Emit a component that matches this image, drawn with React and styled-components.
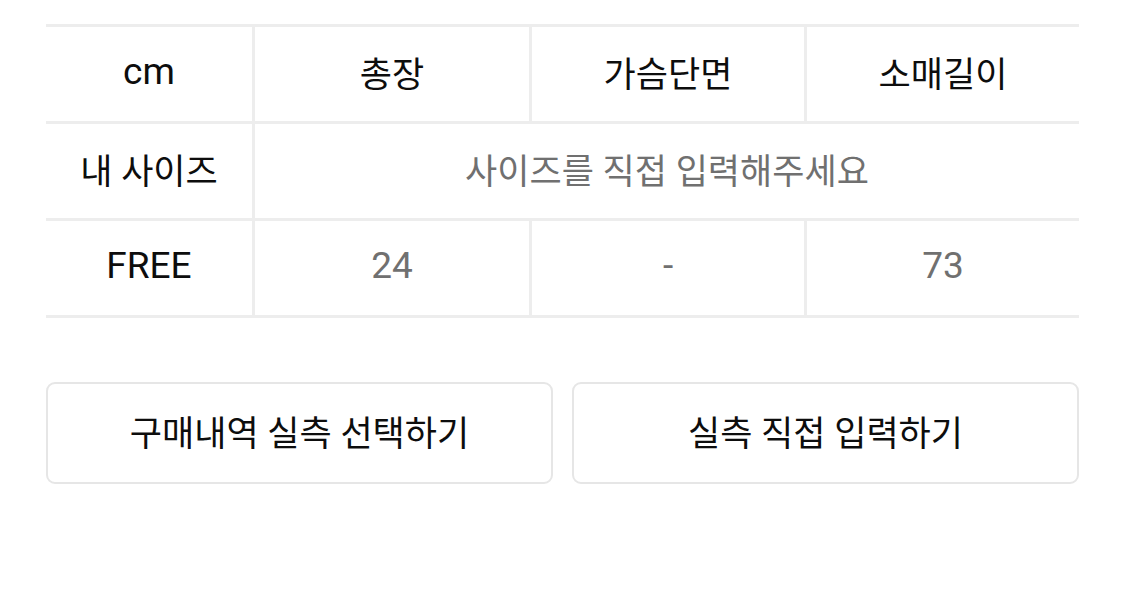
import styled, { createGlobalStyle } from "styled-components";

const GlobalStyle = createGlobalStyle`
  html, body {
    margin: 0;
    padding: 0;
    background: #ffffff;
  }
  body {
    font-family: Roboto, "Noto Sans CJK KR", sans-serif;
  }
`;

const Page = styled.div`
  width: 1125px;
  padding: 24px 46px 0 46px;
  box-sizing: border-box;
`;

const Table = styled.div`
  display: grid;
  grid-template-columns: 209px 277px 275px 272px;
  border-top: 3px solid #ededed;
`;

const Cell = styled.div`
  height: 97px;
  box-sizing: border-box;
  padding-bottom: 6px;
  display: flex;
  align-items: center;
  justify-content: center;
  border-bottom: 3px solid #ededed;
  border-right: ${(p) => (p.$last ? "none" : "3px solid #ededed")};
  grid-column: ${(p) => (p.$span ? `span ${p.$span}` : "auto")};
  font-size: 35px;
  color: ${(p) => (p.$muted ? "#707070" : "#0d0d0d")};
`;

const Latin = styled.span`
  font-size: 37px;
`;

const Actions = styled.div`
  display: grid;
  grid-template-columns: 1fr 1fr;
  gap: 19px;
  margin-top: 64px;
`;

const Button = styled.button`
  height: 102px;
  background: #ffffff;
  border: 2px solid #e6e6e6;
  border-radius: 9px;
  font-family: Roboto, "Noto Sans CJK KR", sans-serif;
  font-size: 35px;
  color: #0d0d0d;
  display: flex;
  align-items: center;
  justify-content: center;
  padding: 0 0 6px 0;
`;

const header = ["cm", "총장", "가슴단면", "소매길이"];
const free = ["FREE", "24", "-", "73"];

const App = () => {
  return (
    <Page>
      <GlobalStyle />
      <Table>
        {header.map((h, i) => (
          <Cell key={h} $last={i === 3}>
            {i === 0 ? <Latin>{h}</Latin> : h}
          </Cell>
        ))}
        <Cell>내 사이즈</Cell>
        <Cell $span={3} $last $muted>
          사이즈를 직접 입력해주세요
        </Cell>
        {free.map((v, i) => (
          <Cell key={i} $last={i === 3} $muted={i > 0}>
            <Latin>{v}</Latin>
          </Cell>
        ))}
      </Table>
      <Actions>
        <Button>구매내역 실측 선택하기</Button>
        <Button>실측 직접 입력하기</Button>
      </Actions>
    </Page>
  );
};

export default App;
